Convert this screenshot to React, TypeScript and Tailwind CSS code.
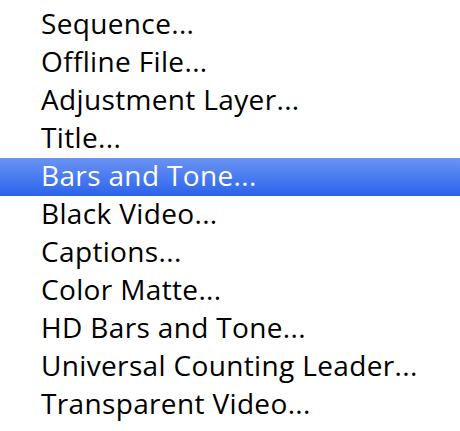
import React from "react";

const items = [
  "Sequence...",
  "Offline File...",
  "Adjustment Layer...",
  "Title...",
  "Bars and Tone...",
  "Black Video...",
  "Captions...",
  "Color Matte...",
  "HD Bars and Tone...",
  "Universal Counting Leader...",
  "Transparent Video...",
];

export default function App() {
  return (
    <div className="w-[460px] h-[431px] bg-white pt-[6px] overflow-hidden" style={{ fontFamily: '"Open Sans", sans-serif' }}>
      {items.map((t, i) => (
        <div
          key={t}
          className={
            "h-[38px] flex items-center pl-[41px] pb-[5px] text-[28px] leading-none tracking-[0.35px] " +
            (i === 4
              ? "text-white bg-gradient-to-b from-[#6a93f3] to-[#2a62eb]"
              : "text-black")
          }
        >
          {t}
        </div>
      ))}
    </div>
  );
}
